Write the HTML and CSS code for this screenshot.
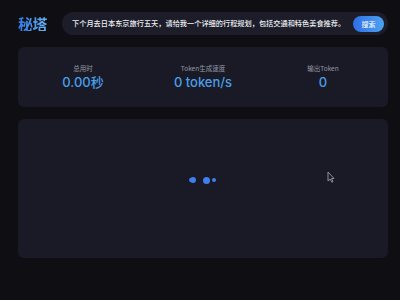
FILE: index.html
```html
<!DOCTYPE html>
<html lang="zh">
<head>
<meta charset="utf-8">
<link rel="stylesheet" href="styles.css">
</head>
<body>
<div class="page">
  <header class="header">
    <div class="logo">秘塔</div>
    <div class="search">
      <span class="query">下个月去日本东京旅行五天，请给我一个详细的行程规划，包括交通和特色美食推荐。</span>
      <button class="btn">搜索</button>
    </div>
  </header>
  <section class="stats">
    <div class="stat">
      <div class="label">总用时</div>
      <div class="value">0.00秒</div>
    </div>
    <div class="stat">
      <div class="label">Token生成速度</div>
      <div class="value">0 token/s</div>
    </div>
    <div class="stat">
      <div class="label">输出Token</div>
      <div class="value">0</div>
    </div>
  </section>
  <section class="result">
    <div class="dots">
      <span class="dot d1"></span>
      <span class="dot d2"></span>
      <span class="dot d3"></span>
    </div>
    <svg class="cursor" width="8" height="12" viewBox="0 0 8 12"><path d="M1 1 L1 10 L3.2 8 L4.8 11.2 L6 10.6 L4.5 7.6 L7 7.4 Z" fill="#1a1b26" stroke="#9a9cab" stroke-width="0.9"/></svg>
  </section>
</div>
</body>
</html>
```
FILE: styles.css
```css
html, body {
  margin: 0;
  padding: 0;
  background: #0e0e13;
  font-family: "Noto Sans CJK SC", "Inter", sans-serif;
  color: #e6e7ee;
}
.page {
  width: 400px;
  height: 300px;
  box-sizing: border-box;
  padding: 12px 12px 0 18px;
  display: flex;
  flex-direction: column;
}
.header {
  display: flex;
  align-items: center;
  height: 23px;
  gap: 14px;
}
.logo {
  font-size: 15px;
  font-weight: 700;
  line-height: 1;
  letter-spacing: -0.5px;
  background: linear-gradient(90deg, #2f7ae8, #6ab6f5);
  -webkit-background-clip: text;
  background-clip: text;
  color: transparent;
  width: 30px;
}
.search {
  flex: 1;
  height: 23px;
  border-radius: 12px;
  background: #1c1d29;
  display: flex;
  align-items: center;
  justify-content: space-between;
  padding: 0 4px 0 10px;
  box-sizing: border-box;
}
.query {
  font-size: 7.2px;
  font-weight: 500;
  color: #eeeff4;
  white-space: nowrap;
  line-height: 1;
}
.btn {
  border: 0;
  width: 31px;
  height: 16px;
  border-radius: 8px;
  background: linear-gradient(90deg, #2f6fe6, #4aa3f0);
  color: #eef3fd;
  font-family: inherit;
  font-size: 7px;
  font-weight: 500;
  padding: 0;
  line-height: 16px;
}
.stats {
  margin-top: 12px;
  height: 60px;
  background: #191a26;
  border-radius: 6px;
  display: grid;
  grid-template-columns: 1fr 1fr 1fr;
  padding: 0 5px;
  align-items: center;
}
.stat {
  display: flex;
  flex-direction: column;
  align-items: center;
  gap: 4px;
}
.label {
  font-size: 6.5px;
  color: #9597a4;
  line-height: 1;
}
.value {
  font-family: "Inter", "Noto Sans CJK SC", sans-serif;
  font-size: 13px;
  font-weight: 500;
  color: #4a9fea;
  line-height: 1;
}
.result {
  margin-top: 12px;
  height: 139px;
  background: #191a26;
  border-radius: 6px;
  position: relative;
  display: flex;
  align-items: center;
  justify-content: center;
  box-sizing: border-box;
}
.dots {
  display: flex;
  align-items: center;
  gap: 4px;
  margin-bottom: 17px;
}
.dot {
  border-radius: 50%;
  background: #3f7ef0;
  display: block;
}
.d1 { width: 6px; height: 6px; box-shadow: -2px 0 0 -1px #3f7ef0; }
.d2 { width: 7px; height: 7px; margin-left: 3px; }
.d3 { width: 4px; height: 4px; margin-left: -2px; }
.cursor {
  position: absolute;
  left: 309px;
  top: 52px;
}
```
